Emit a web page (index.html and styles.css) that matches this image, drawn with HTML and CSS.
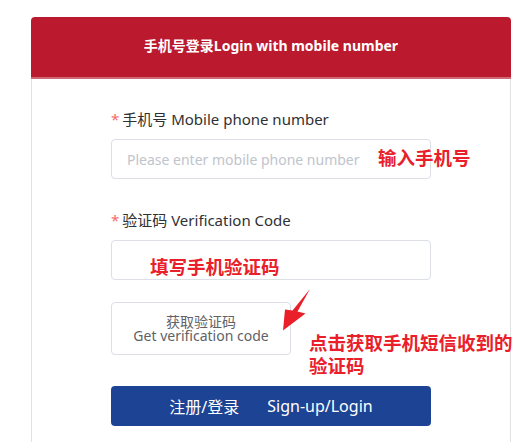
FILE: index.html
```html
<!DOCTYPE html>
<html lang="zh">
<head>
<meta charset="utf-8">
<link rel="stylesheet" href="styles.css">
</head>
<body>
<div class="card">
  <div class="card-header">手机号登录Login with mobile number</div>
  <div class="card-body">
    <div class="field">
      <label class="label"><span class="req">*</span>手机号 Mobile phone number</label>
      <input class="input" type="text" placeholder="Please enter mobile phone number">
    </div>
    <div class="field">
      <label class="label"><span class="req">*</span>验证码 Verification Code</label>
      <input class="input" type="text">
    </div>
    <button class="code-btn" type="button">获取验证码<br>Get verification code</button>
    <button class="submit-btn" type="button"><span>注册/登录</span><span>Sign-up/Login</span></button>
  </div>
  <div class="note note-phone">输入手机号</div>
  <div class="note note-code">填写手机验证码</div>
  <div class="note note-get">点击获取手机短信收到的<br>验证码</div>
  <svg class="arrow" width="34" height="46" viewBox="0 0 34 46">
    <polygon points="30,1 17.5,23.5 25.5,25.5 3,42.5 5,21.5 12.5,22.5" fill="#e9202a"/>
  </svg>
</div>
</body>
</html>
```

FILE: styles.css
```css
* { box-sizing: border-box; }
html, body { margin: 0; padding: 0; background: #fff; }
body {
  font-family: "Noto Sans", "Noto Sans CJK SC", sans-serif;
  color: #303133;
}
.card {
  position: relative;
  width: 480px;
  margin: 17px 0 0 31px;
}
.card-header {
  height: 62px;
  background: #bb1a2e;
  border-bottom: 2px solid #cc6a75;
  border-radius: 4px 4px 0 0;
  color: #fff;
  font-size: 14px;
  font-weight: 700;
  text-align: center;
  line-height: 58px;
}
.card-body {
  border-left: 1px solid #e2e2e2;
  border-right: 1px solid #e2e2e2;
  padding: 30px 0 20px 79px;
  display: flex;
  flex-direction: column;
  align-items: flex-start;
}
.field {
  display: flex;
  flex-direction: column;
  margin-bottom: 31px;
}
.label {
  font-size: 15px;
  line-height: 20px;
  color: #303133;
  margin-bottom: 10px;
}
.req {
  color: #f56c6c;
  margin-right: 3px;
}
.input {
  width: 320px;
  height: 40px;
  border: 1px solid #dcdfe6;
  border-radius: 4px;
  padding: 0 15px;
  font-family: inherit;
  font-size: 14px;
  color: #606266;
  outline: none;
}
.input::placeholder { color: #c0c4cc; }
.field + .field { margin-bottom: 22px; }
.code-btn {
  width: 180px;
  height: 53px;
  border: 1px solid #dcdfe6;
  border-radius: 4px;
  background: #fff;
  color: #606266;
  font-family: inherit;
  font-size: 14px;
  line-height: 14px;
  padding: 0;
  margin-bottom: 31px;
}
.submit-btn {
  width: 320px;
  height: 40px;
  border: none;
  border-radius: 4px;
  background: #1d4394;
  color: #fff;
  font-family: inherit;
  font-size: 16px;
  display: flex;
  justify-content: center;
  align-items: center;
  gap: 28px;
  padding: 0;
}
.note {
  position: absolute;
  color: #e9202a;
  font-weight: 700;
  font-size: 18.5px;
  line-height: 23px;
  white-space: nowrap;
}
.note-phone { left: 347px; top: 129px; }
.note-code { left: 119px; top: 238px; }
.note-get { left: 278px; top: 314px; }
.arrow {
  position: absolute;
  left: 249px;
  top: 271px;
}
```
